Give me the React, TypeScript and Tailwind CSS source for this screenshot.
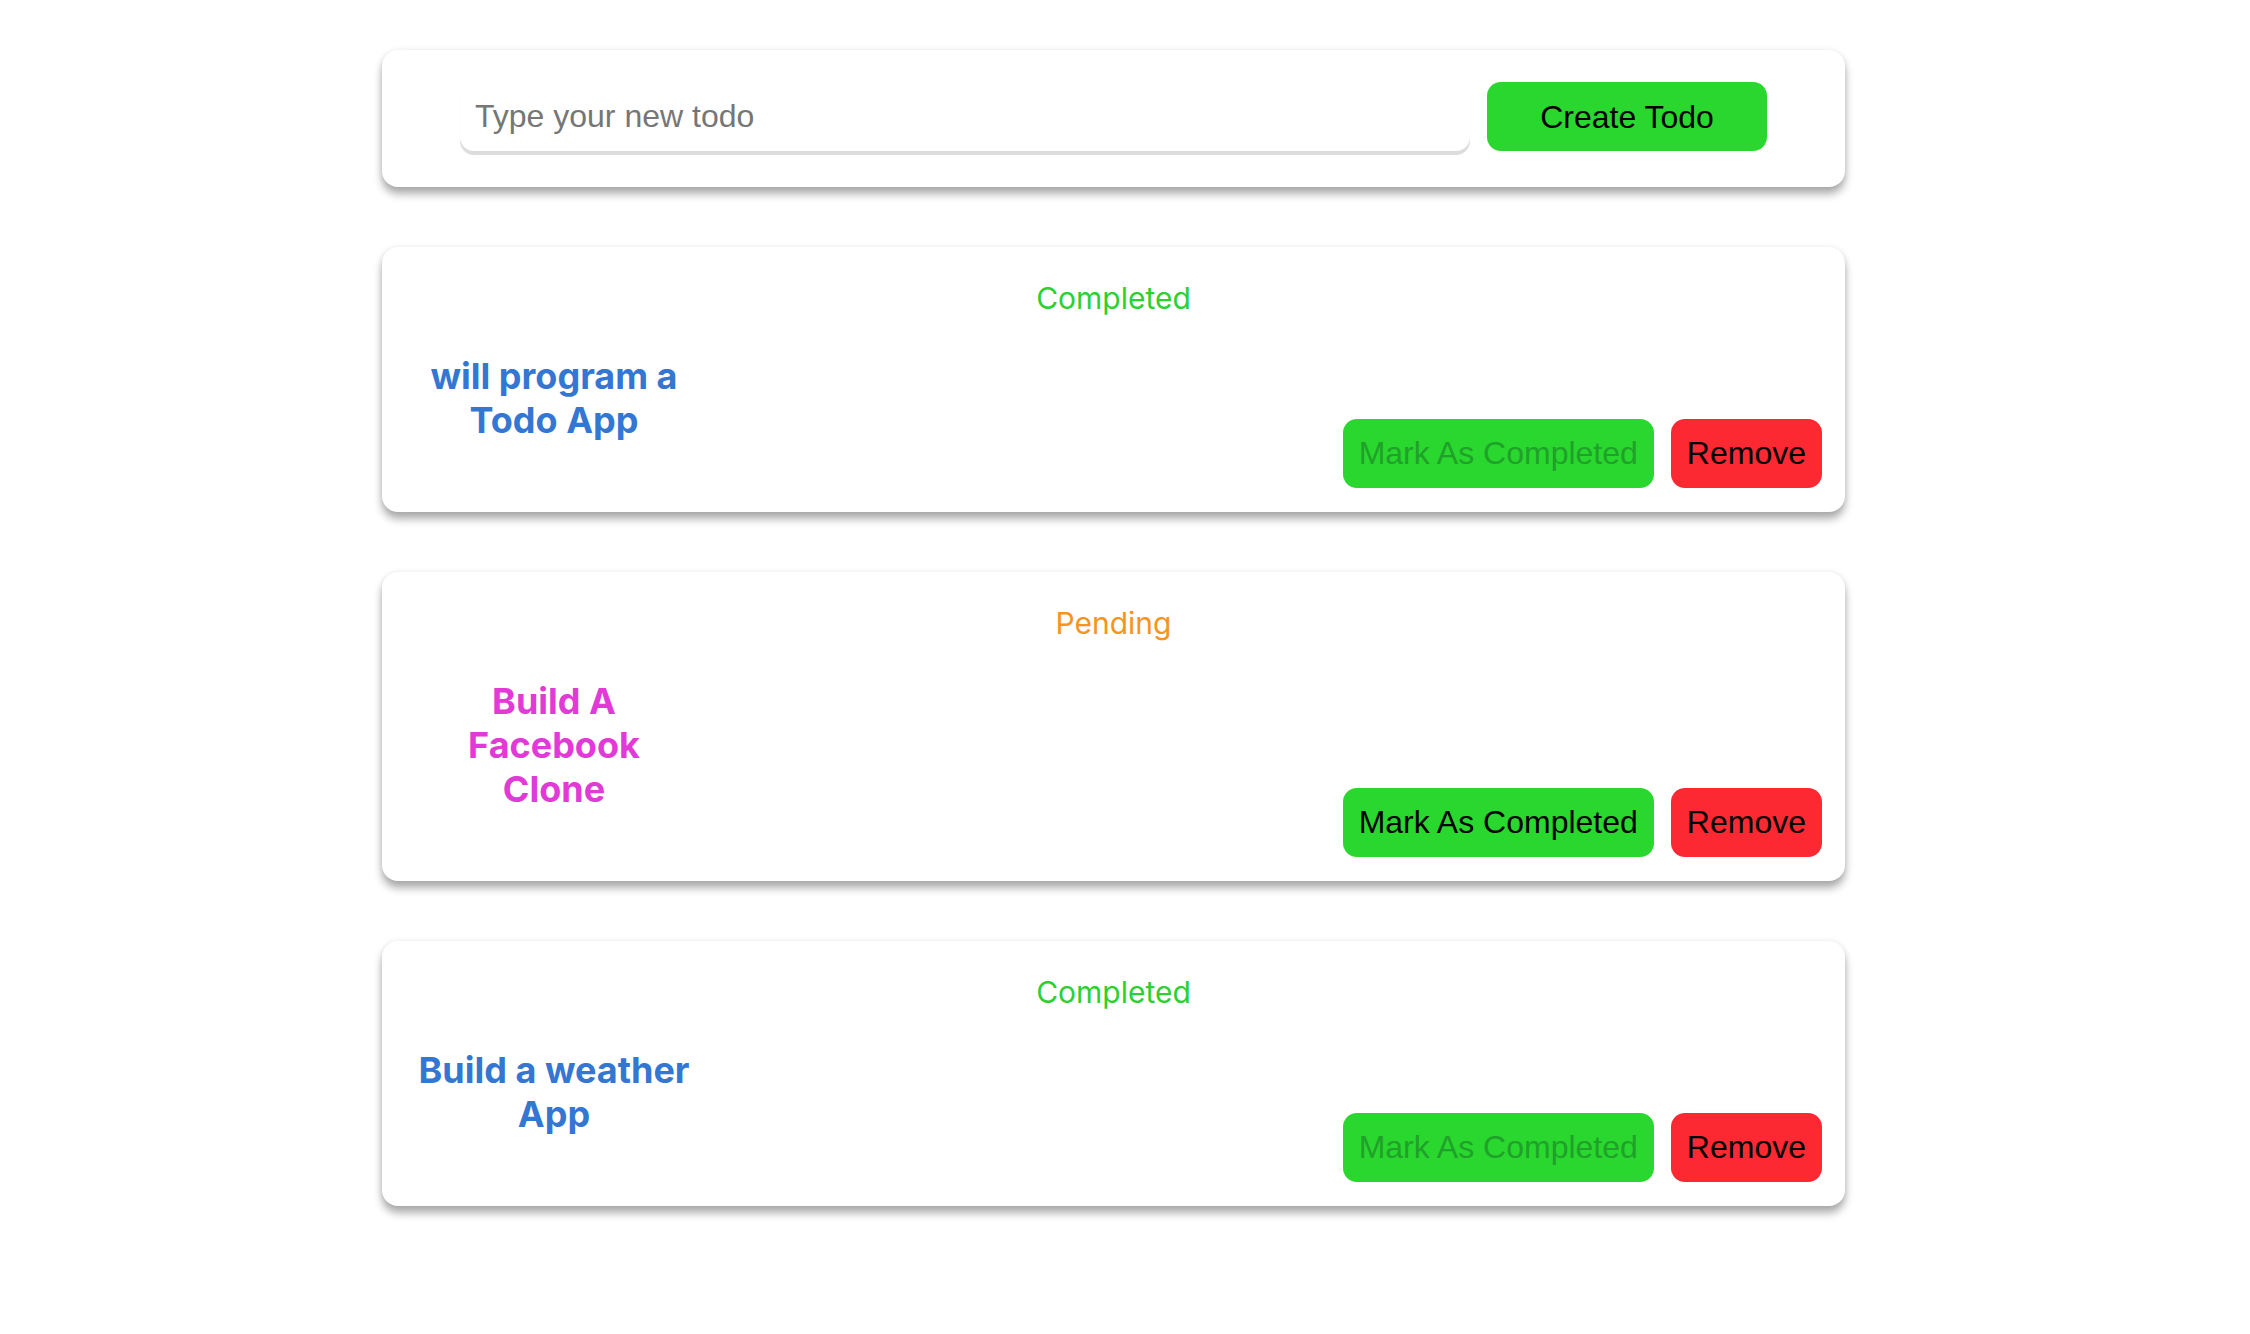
import { useState } from "react";

type Todo = { id: number; title: string; completed: boolean };

const initialTodos: Todo[] = [
  { id: 1, title: "will program a Todo App", completed: true },
  { id: 2, title: "Build A Facebook Clone", completed: false },
  { id: 3, title: "Build a weather App", completed: true },
];

function TodoCard({ todo }: { todo: Todo }) {
  const titleColor = todo.completed ? "text-[#3477d2]" : "text-[#e23ad6]";
  return (
    <div className="flex flex-col rounded-[16px] bg-white px-[23px] pt-[33px] pb-[24px] shadow-[0_7px_8px_rgba(0,0,0,0.32),0_0_6px_rgba(0,0,0,0.08)]">
      <p
        className={`text-center text-[30px] leading-[36px] font-['Inter',sans-serif] ${
          todo.completed ? "text-[#2bd12f]" : "text-[#f7941d]"
        }`}
      >
        {todo.completed ? "Completed" : "Pending"}
      </p>
      <div className="mt-[38px] flex items-end justify-between">
        <h2
          className={`ml-[11px] w-[276px] pb-[46px] text-center text-[36px] leading-[44px] font-bold font-['Inter',sans-serif] ${titleColor}`}
        >
          {todo.title}
        </h2>
        <div className="flex gap-[17px] font-['Liberation_Sans',Arial,sans-serif] text-[32px] leading-[36px]">
          <button
            disabled={todo.completed}
            className={`h-[69px] rounded-[14px] bg-[#2ad72e] px-[16px] pb-[2px] ${
              todo.completed ? "text-[#1fa12a]" : "text-black"
            }`}
          >
            Mark As Completed
          </button>
          <button className="h-[69px] rounded-[14px] bg-[#fc2832] px-[16px] pb-[2px] text-black">
            Remove
          </button>
        </div>
      </div>
    </div>
  );
}

export default function App() {
  const [text, setText] = useState("");
  return (
    <div className="min-h-screen bg-white">
      <div className="ml-[382px] flex w-[1463px] flex-col gap-[60px] pt-[50px] pb-[60px]">
        <div className="flex h-[137px] items-start gap-[17px] rounded-[16px] bg-white px-[78px] pt-[32px] shadow-[0_7px_8px_rgba(0,0,0,0.32),0_0_6px_rgba(0,0,0,0.08)]">
          <input
            value={text}
            onChange={(e) => setText(e.target.value)}
            placeholder="Type your new todo"
            className="h-[69px] flex-1 rounded-[14px] bg-white px-[15px] font-['Liberation_Sans',Arial,sans-serif] text-[32px] text-black shadow-[0_4px_1px_#dcdcdc] outline-none placeholder:text-[#767676]"
          />
          <button className="h-[69px] w-[280px] rounded-[14px] bg-[#2ad72e] font-['Liberation_Sans',Arial,sans-serif] text-[32px] text-black">
            Create Todo
          </button>
        </div>
        {initialTodos.map((t) => (
          <TodoCard key={t.id} todo={t} />
        ))}
      </div>
    </div>
  );
}
